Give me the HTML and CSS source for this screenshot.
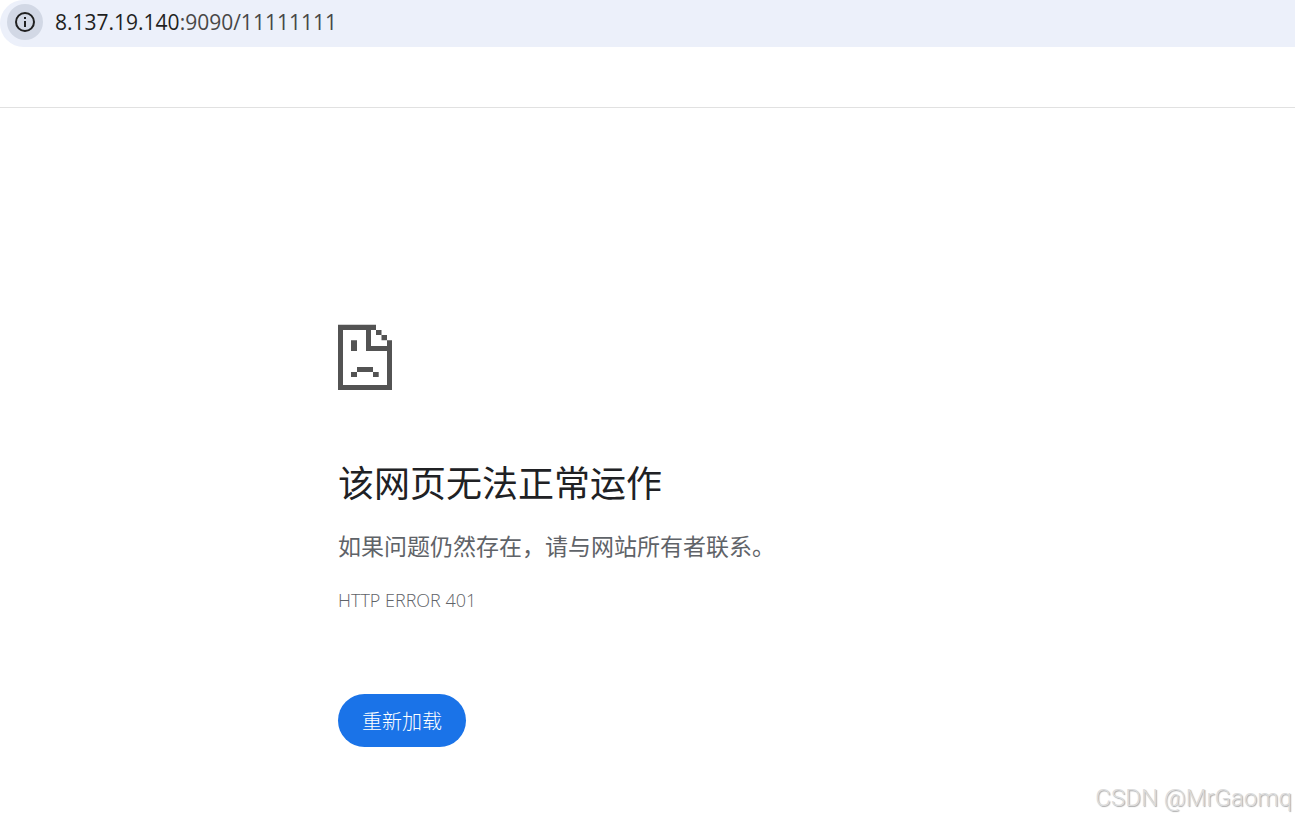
FILE: index.html
```
<!DOCTYPE html>
<html lang="zh-CN">
  <head>
    <meta charset="UTF-8" />
    <meta name="viewport" content="width=device-width, initial-scale=1.0" />
    <title>8.137.19.140:9090</title>
    <link rel="stylesheet" href="styles.css">
  </head>
  <body>
    <header class="toolbar">
      <div class="address-bar">
        <button class="site-info" aria-label="查看网站信息">
          <svg width="20" height="20" viewBox="0 0 20 20">
            <circle cx="10" cy="10" r="9" fill="none" stroke="#1f1f1f" stroke-width="2" />
            <path d="M9 9h2v6H9zM9 5h2v2H9z" fill="#1f1f1f" />
          </svg>
        </button>
        <div class="url"><span class="host">8.137.19.140</span>:9090/11111111</div>
      </div>
    </header>

    <main class="error-page">
      <svg class="sad-page" width="54" height="66" viewBox="0 0 54 66">
        <path d="M0 .7H38V6H33V22H49V16.3H54V66H0ZM5 6V61H49V27H28V6Z" fill-rule="evenodd" />
        <path d="M38 6h5.5v5H38zM43.5 11H49v5.3h-5.5z" />
        <path d="M13 16.3h6V27h-6zM19 43h16v5H19zM13 48h6v5h-6zM35 48h5.7v5H35z" />
      </svg>
      <h1>该网页无法正常运作</h1>
      <p class="summary">如果问题仍然存在，请与网站所有者联系。</p>
      <div class="error-code">HTTP ERROR 401</div>
      <button class="reload">重新加载</button>
    </main>

    <div class="watermark">CSDN @MrGaomq</div>
  </body>
</html>
```
FILE: styles.css
```
* {
  box-sizing: border-box;
}

body {
  margin: 0;
  min-height: 100vh;
  background: #fff;
  font-family: "Open Sans", "Noto Sans CJK SC", sans-serif;
}

button {
  border: none;
  cursor: pointer;
  font-family: inherit;
}

/* address bar */
.toolbar {
  height: 108px;
  border-bottom: 1px solid #e1e1e1;
}

.address-bar {
  display: flex;
  align-items: center;
  gap: 12px;
  height: 47px;
  padding: 0 7px 3px;
  background: #ecf0fa;
  border-radius: 24px 0 0 24px;
}

.site-info {
  display: flex;
  align-items: center;
  justify-content: center;
  width: 36px;
  height: 36px;
  padding: 0;
  border-radius: 50%;
  background: #d2d8e5;
}

.url {
  font-size: 21px;
  line-height: 26px;
  color: #474747;
}

.host {
  color: #1f1f1f;
}

/* error message */
.error-page {
  max-width: 619px;
  margin: 0 auto;
  padding-top: 216px;
}

.sad-page {
  display: block;
  fill: #535353;
}

h1 {
  margin: 68px 0 0;
  font-size: 36px;
  font-weight: 400;
  line-height: 52px;
  color: #202124;
}

.summary {
  margin: 19px 0 0;
  font-size: 23px;
  line-height: 34px;
  color: #5f6368;
}

.error-code {
  margin-top: 25px;
  font-size: 18px;
  font-weight: 300;
  line-height: 24px;
  color: #5f6368;
}

.reload {
  display: block;
  margin-top: 82px;
  padding: 13px 24px 10px;
  border-radius: 27px;
  background: #1a73e8;
  color: #fff;
  font-size: 20px;
  font-weight: 300;
  line-height: 30px;
}

.watermark {
  position: absolute;
  right: 3px;
  bottom: 6px;
  font-family: Roboto, sans-serif;
  font-size: 24px;
  font-weight: 300;
  line-height: 30px;
  color: #dcdcdc;
  text-shadow: 1px 1px 1px #aaa;
}
```
